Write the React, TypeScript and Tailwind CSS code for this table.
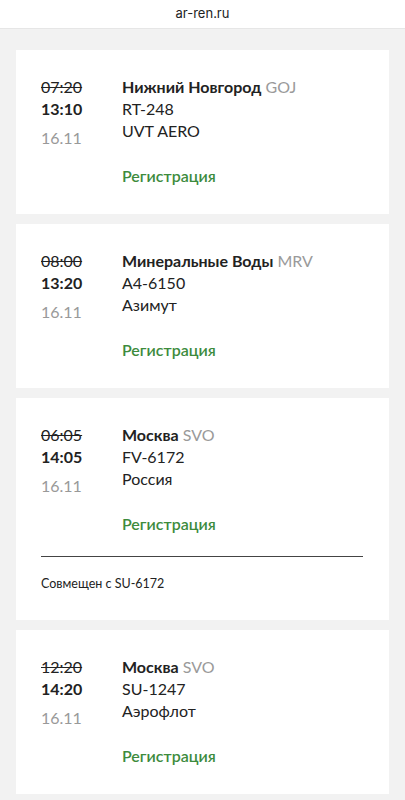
const flights = [
  { old: "07:20", time: "13:10", date: "16.11", city: "Нижний Новгород", code: "GOJ", flight: "RT-248", airline: "UVT AERO" },
  { old: "08:00", time: "13:20", date: "16.11", city: "Минеральные Воды", code: "MRV", flight: "A4-6150", airline: "Азимут" },
  { old: "06:05", time: "14:05", date: "16.11", city: "Москва", code: "SVO", flight: "FV-6172", airline: "Россия", shared: "SU-6172" },
  { old: "12:20", time: "14:20", date: "16.11", city: "Москва", code: "SVO", flight: "SU-1247", airline: "Аэрофлот" },
];

export default function App() {
  return (
    <div className="min-h-[800px] bg-[#f2f2f2]" style={{ fontFamily: "Lato, 'Open Sans', sans-serif" }}>
      <div className="h-[29px] bg-white border-b border-[#e6e6e6] flex items-center justify-center">
        <span className="text-[13px] text-[#222] font-['Inter',sans-serif]">ar-ren.ru</span>
      </div>
      <div className="px-4 pt-[21px] flex flex-col gap-[10px]">
        {flights.map((f) => (
          <div key={f.flight} className="bg-white px-[25px] pt-[26px] pb-[27px]">
            <div className="flex">
              <div className="w-[81px] flex flex-col text-[16px] leading-[22px]">
                <span className="line-through text-[#222]">{f.old}</span>
                <span className="font-bold text-[#222]">{f.time}</span>
                <span className="text-[#999] mt-[7px]">{f.date}</span>
              </div>
              <div className="flex flex-col text-[16px] leading-[22px] text-[#222]">
                <span>
                  <span className="font-bold">{f.city}</span> <span className="text-[#9a9a9a]">{f.code}</span>
                </span>
                <span>{f.flight}</span>
                <span>{f.airline}</span>
                <span className="mt-[23px] text-[#3d8b3d] font-semibold">Регистрация</span>
              </div>
            </div>
            {f.shared && (
              <>
                <div className="mt-[21px] h-px bg-[#444] mr-[1px]" />
                <div className="mt-[18px] -mb-[1px] text-[12.5px] text-[#222]">Совмещен с {f.shared}</div>
              </>
            )}
          </div>
        ))}
      </div>
    </div>
  );
}
